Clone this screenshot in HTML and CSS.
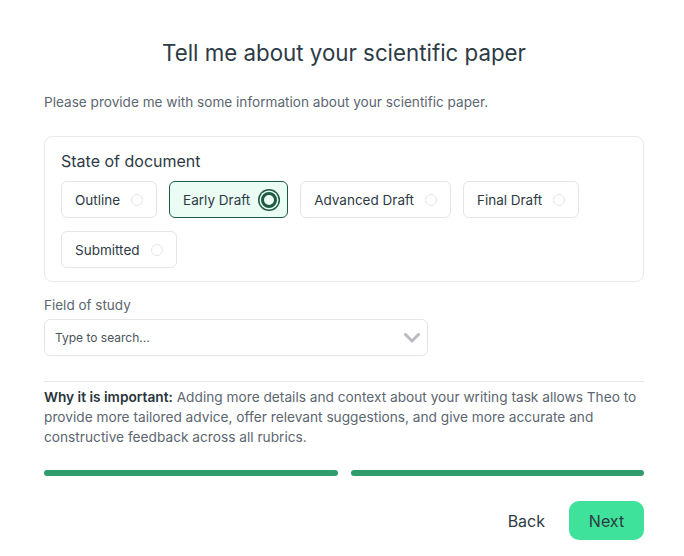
FILE: index.html
```html
<!DOCTYPE html>
<html lang="en">
<head>
  <meta charset="UTF-8" />
  <title>Tell me about your scientific paper</title>
  <link rel="stylesheet" href="styles.css">
</head>
<body>
  <div class="wizard">
    <h1 class="title">Tell me about your scientific paper</h1>
    <p class="intro">Please provide me with some information about your scientific paper.</p>

    <div class="card">
      <div class="card-title">State of document</div>
      <div class="chips">
        <label class="chip"><span>Outline</span><span class="radio"></span></label>
        <label class="chip selected"><span>Early Draft</span><span class="radio"></span></label>
        <label class="chip"><span>Advanced Draft</span><span class="radio"></span></label>
        <label class="chip"><span>Final Draft</span><span class="radio"></span></label>
        <label class="chip"><span>Submitted</span><span class="radio"></span></label>
      </div>
    </div>

    <div class="field-label">Field of study</div>
    <div class="select">
      <span class="placeholder">Type to search...</span>
      <svg class="chevron" width="16" height="10" viewBox="0 0 16 10">
        <path d="M1.5 1.5 L8 8 L14.5 1.5" fill="none" stroke="#b8bcc0" stroke-width="3" stroke-linecap="round" stroke-linejoin="round"/>
      </svg>
    </div>

    <hr class="divider">

    <p class="note"><strong>Why it is important:</strong> Adding more details and context about your writing task allows Theo to provide more tailored advice, offer relevant suggestions, and give more accurate and constructive feedback across all rubrics.</p>

    <div class="progress">
      <div class="step done"></div>
      <div class="step done"></div>
    </div>

    <div class="actions">
      <button class="btn-back">Back</button>
      <button class="btn-next">Next</button>
    </div>
  </div>
</body>
</html>
```

FILE: styles.css
```css
body {
  margin: 0;
  background: #ffffff;
  font-family: Inter, "Noto Sans", sans-serif;
  color: #2d3a44;
}
.wizard {
  width: 600px;
  margin: 0 auto;
  padding-top: 39px;
  padding-left: 4px;
}
.title {
  margin: 0;
  text-align: center;
  font-size: 22.3px;
  font-weight: 400;
  line-height: 28px;
  color: #2d3b46;
}
.intro {
  margin: 26px 0 0;
  font-size: 13.6px;
  line-height: 18px;
  color: #5c6670;
}
.card {
  margin-top: 25px;
  border: 1px solid #e6e8ea;
  border-radius: 8px;
  padding: 14px 16px 13px;
}
.card-title {
  font-size: 16px;
  line-height: 20px;
  color: #2d3a44;
}
.chips {
  margin-top: 10px;
  display: flex;
  flex-wrap: wrap;
  gap: 13px 12px;
}
.chip {
  display: flex;
  align-items: center;
  gap: 11px;
  height: 37px;
  box-sizing: border-box;
  padding: 0 13px;
  border: 1px solid #e3e6e8;
  border-radius: 6px;
  font-size: 13.5px;
  color: #2d3a44;
  background: #fff;
}
.radio {
  width: 10px;
  height: 10px;
  border: 1px solid #e2e5e7;
  border-radius: 50%;
}
.chip.selected {
  background: #eafcf4;
  border-color: #1f5a45;
  gap: 8px;
  padding-right: 10px;
}
.chip.selected .radio {
  width: 10px;
  height: 10px;
  border: 3px solid #1f5a45;
  box-shadow: 0 0 0 1.5px #eafcf4, 0 0 0 3px #1f5a45;
  margin-left: 3px;
  background: #eafcf4;
}
.field-label {
  margin-top: 14px;
  font-size: 13.5px;
  line-height: 18px;
  color: #5c6670;
}
.select {
  margin-top: 5px;
  width: 384px;
  height: 37px;
  box-sizing: border-box;
  border: 1px solid #e3e6e8;
  border-radius: 6px;
  display: flex;
  align-items: center;
  justify-content: space-between;
  padding: 0 7px 0 10px;
}
.placeholder {
  font-size: 12px;
  color: #4a545c;
}
.divider {
  margin: 25px 0 0;
  border: 0;
  border-top: 1px solid #e6e8ea;
}
.note {
  margin: 5px 0 0;
  font-size: 13.7px;
  line-height: 20px;
  color: #5c6670;
}
.note strong {
  font-weight: 600;
  color: #2a343c;
}
.progress {
  margin-top: 23px;
  display: flex;
  gap: 13px;
}
.step {
  flex: 1;
  height: 6px;
  border-radius: 3px;
  background: #e6e8ea;
}
.step.done {
  background: #2f9d6c;
}
.actions {
  margin-top: 25px;
  display: flex;
  justify-content: flex-end;
  align-items: center;
  gap: 12px;
}
.actions button {
  font-family: Inter, "Noto Sans", sans-serif;
  font-size: 16px;
  border: none;
  cursor: pointer;
  color: #2d3a44;
}
.btn-back {
  background: none;
  padding: 8px 12px;
}
.btn-next {
  background: #3ee29a;
  border-radius: 10px;
  height: 39px;
  width: 75px;
}
```
